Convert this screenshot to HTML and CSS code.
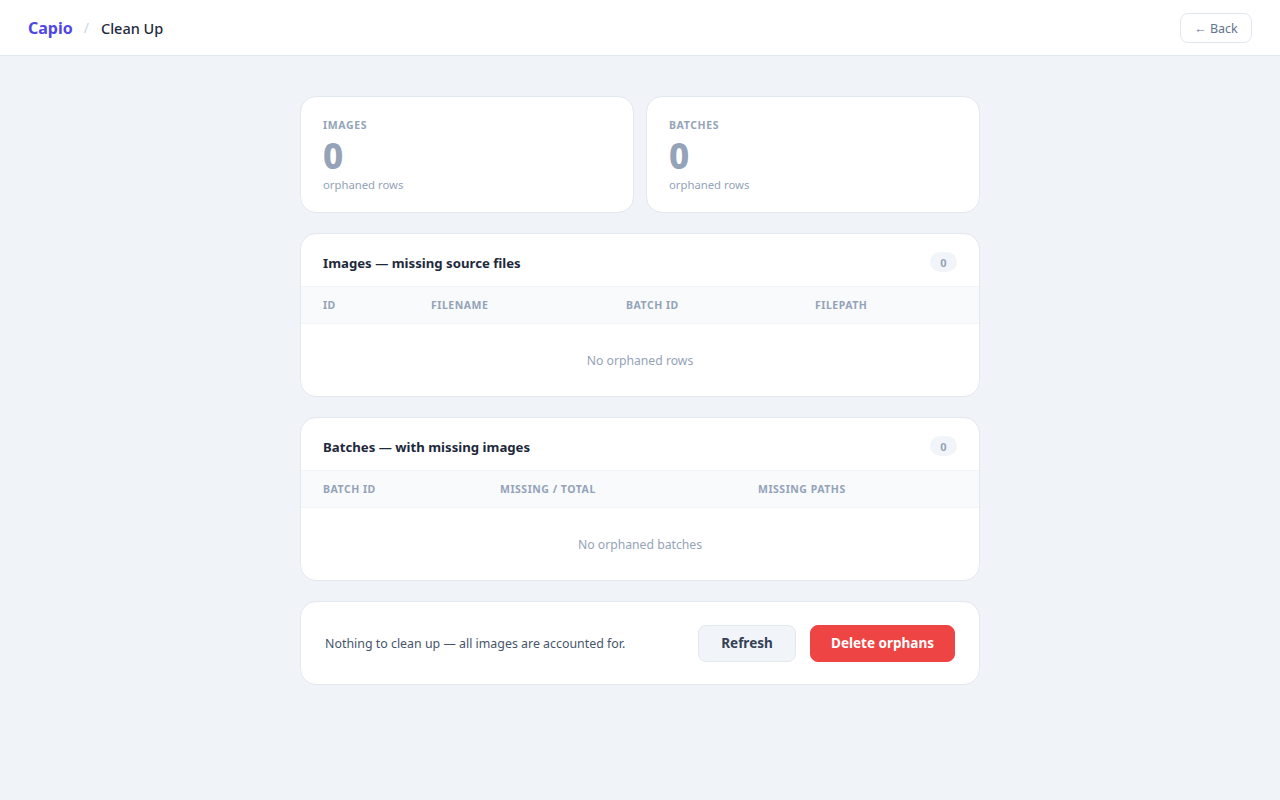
FILE: index.html
```html
<!DOCTYPE html>
<html lang="en">
<head>
<meta charset="utf-8">
<title>Capio — Clean Up</title>
<link rel="stylesheet" href="styles.css">
</head>
<body>
<header class="topbar">
  <nav class="crumbs">
    <span class="brand">Capio</span>
    <span class="sep">/</span>
    <span class="page">Clean Up</span>
  </nav>
  <button class="back-btn">← Back</button>
</header>

<main class="wrap">
  <section class="stats">
    <div class="card stat">
      <div class="stat-label">Images</div>
      <div class="stat-value">0</div>
      <div class="stat-sub">orphaned rows</div>
    </div>
    <div class="card stat">
      <div class="stat-label">Batches</div>
      <div class="stat-value">0</div>
      <div class="stat-sub">orphaned rows</div>
    </div>
  </section>

  <section class="card panel">
    <div class="panel-head">
      <h2>Images — missing source files</h2>
      <span class="badge">0</span>
    </div>
    <table class="grid t-images">
      <thead>
        <tr><th>ID</th><th>Filename</th><th>Batch ID</th><th>Filepath</th></tr>
      </thead>
      <tbody>
        <tr><td colspan="4" class="empty">No orphaned rows</td></tr>
      </tbody>
    </table>
  </section>

  <section class="card panel">
    <div class="panel-head">
      <h2>Batches — with missing images</h2>
      <span class="badge">0</span>
    </div>
    <table class="grid t-batches">
      <thead>
        <tr><th>Batch ID</th><th>Missing / Total</th><th>Missing Paths</th></tr>
      </thead>
      <tbody>
        <tr><td colspan="3" class="empty">No orphaned batches</td></tr>
      </tbody>
    </table>
  </section>

  <section class="card actions">
    <p class="status">Nothing to clean up — all images are accounted for.</p>
    <div class="btns">
      <button class="btn btn-light">Refresh</button>
      <button class="btn btn-danger">Delete orphans</button>
    </div>
  </section>
</main>
</body>
</html>
```

FILE: styles.css
```css
* { box-sizing: border-box; }
html, body { margin: 0; padding: 0; }
body {
  font-family: "Noto Sans", "Open Sans", sans-serif;
  background: #f0f3f8;
  color: #1e293b;
  min-height: 800px;
}

.topbar {
  height: 56px;
  background: #ffffff;
  border-bottom: 1px solid #e2e8f0;
  display: flex;
  align-items: center;
  justify-content: space-between;
  padding: 0 28px;
}
.crumbs { display: flex; align-items: center; }
.brand { color: #4f46e5; font-weight: 700; font-size: 16px; }
.sep { color: #cbd5e1; font-size: 14px; margin: 0 12px 0 11px; }
.page { color: #1e293b; font-size: 14.5px; font-weight: 500; }
.back-btn {
  font-family: inherit;
  font-size: 12.5px;
  color: #64748b;
  background: #ffffff;
  border: 1px solid #e2e8f0;
  border-radius: 8px;
  height: 30px;
  width: 72px;
  padding: 2px 0 0;
  cursor: pointer;
}

.wrap {
  width: 680px;
  margin: 40px auto 0;
  display: flex;
  flex-direction: column;
  gap: 20px;
}

.card {
  background: #ffffff;
  border: 1px solid #e2e8f0;
  border-radius: 16px;
}

.stats {
  display: grid;
  grid-template-columns: 1fr 1fr;
  gap: 12px;
}
.stat { padding: 20px 22px 19px; height: 117px; }
.stat-label {
  font-size: 10.5px;
  font-weight: 700;
  letter-spacing: 0.06em;
  text-transform: uppercase;
  color: #94a3b8;
  line-height: 16px;
}
.stat-value {
  font-size: 35px;
  font-weight: 800;
  color: #94a3b8;
  line-height: 42px;
  margin-top: 2px;
}
.stat-sub { font-size: 11.3px; color: #94a3b8; line-height: 16px; margin-top: 0; }

.panel { overflow: hidden; }
.panel-head {
  display: flex;
  align-items: center;
  justify-content: space-between;
  height: 53px;
  padding: 0 22px;
  border-bottom: 1px solid #f1f5f9;
}
.panel-head h2 { margin: 0; font-size: 13.2px; font-weight: 700; color: #1e293b; padding-top: 6px; }
.badge {
  display: inline-flex;
  align-items: center;
  justify-content: center;
  min-width: 27px;
  height: 20px;
  padding: 0 8px;
  border-radius: 10px;
  background: #f1f5f9;
  color: #94a3b8;
  font-size: 11px;
  font-weight: 700;
  margin-top: 4px;
}

.grid { width: 100%; border-collapse: collapse; table-layout: fixed; }
.grid th {
  background: #f8fafc;
  height: 36px;
  padding: 0 0 0 22px;
  text-align: left;
  font-size: 10.5px;
  font-weight: 700;
  letter-spacing: 0.05em;
  text-transform: uppercase;
  color: #94a3b8;
  border-bottom: 1px solid #f1f5f9;
}
.t-images th:nth-child(1) { width: 108px; }
.t-images th:nth-child(2) { width: 195px; }
.t-images th:nth-child(3) { width: 189px; }
.t-batches th:nth-child(1) { width: 177px; }
.t-batches th:nth-child(2) { width: 258px; }
.grid td.empty {
  height: 73px;
  text-align: center;
  font-size: 12.2px;
  color: #94a3b8;
  padding: 1px 0 0;
}

.actions {
  display: flex;
  align-items: center;
  justify-content: space-between;
  height: 84px;
  padding: 0 24px 0 24px;
}
.status { margin: 0; font-size: 12.4px; color: #475569; }
.btns { display: flex; gap: 14px; }
.btn {
  font-family: inherit;
  height: 37px;
  border-radius: 8px;
  font-size: 13.5px;
  font-weight: 700;
  padding: 0;
  white-space: nowrap;
  cursor: pointer;
}
.btn-light { background: #f1f5f9; border: 1px solid #e2e8f0; color: #334155; width: 98px; }
.btn-danger { background: #ef4444; border: 1px solid #ef4444; color: #ffffff; width: 145px; }
```
